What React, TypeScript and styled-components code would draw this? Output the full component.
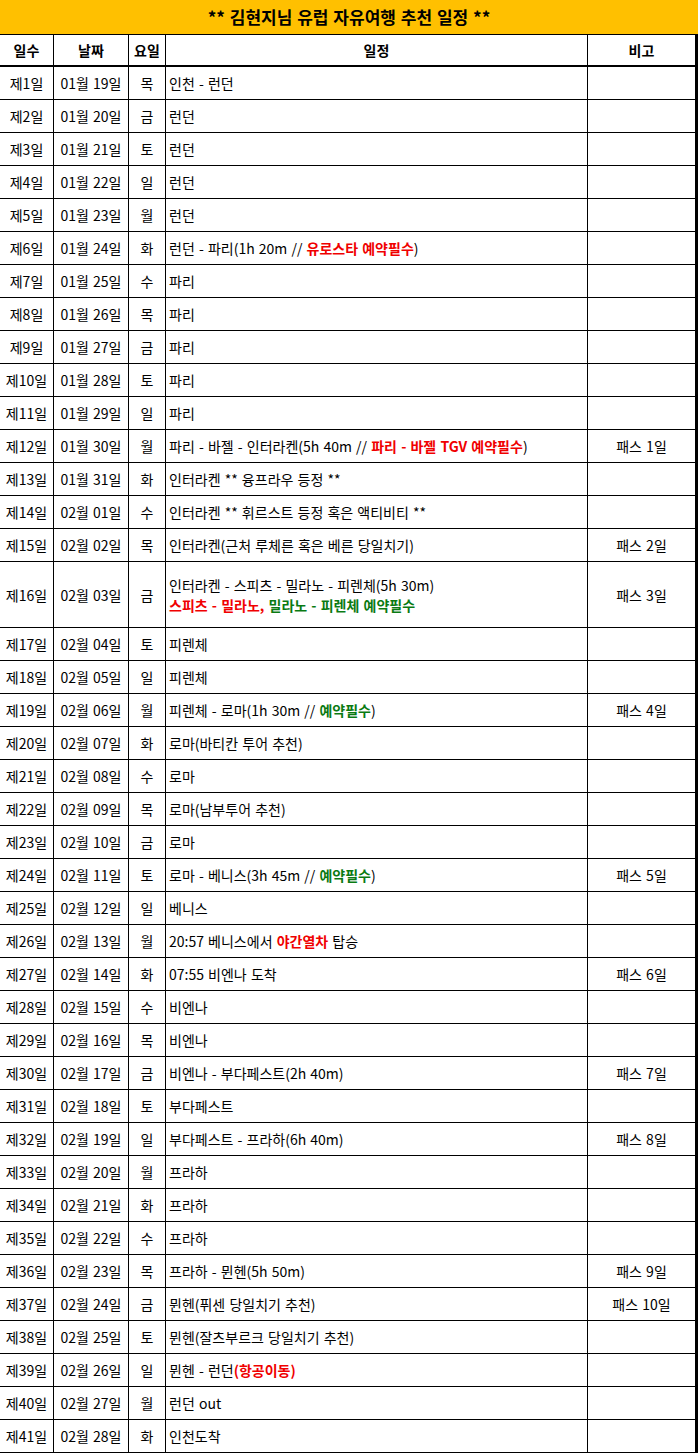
import React from 'react'
import styled, { createGlobalStyle } from 'styled-components'

const GlobalStyle = createGlobalStyle`
  html, body {
    margin: 0;
    padding: 0;
    background: #ffffff;
  }
  body {
    font-family: 'Malgun Gothic', 'Noto Sans CJK KR', 'Noto Sans', sans-serif;
    color: #000;
  }
`

const Sheet = styled.div`
  width: 698px;
  box-sizing: border-box;
`

const Title = styled.div`
  height: 35px;
  box-sizing: border-box;
  background: #ffc000;
  border-bottom: 1px solid #000;
  display: flex;
  align-items: center;
  justify-content: center;
  font-size: 17px;
  font-weight: 700;
  word-spacing: 1px;
  padding-bottom: 1px;
`

const Body = styled.div`
  border-right: 3px solid #000;
`

const Row = styled.div<{ $tall?: boolean; $head?: boolean }>`
  display: grid;
  grid-template-columns: 54px 75px 37px 422px 1fr;
  height: ${(p) => (p.$head ? 32 : p.$tall ? 66 : 33)}px;
  box-sizing: border-box;
  border-bottom: ${(p) => (p.$head ? 2 : 1)}px solid #000;
`

const Cell = styled.div<{ $left?: boolean; $bold?: boolean }>`
  display: flex;
  flex-direction: column;
  justify-content: center;
  align-items: ${(p) => (p.$left ? 'flex-start' : 'center')};
  padding-left: ${(p) => (p.$left ? 3 : 0)}px;
  box-sizing: border-box;
  border-right: 1px solid #000;
  font-size: 14px;
  font-weight: ${(p) => (p.$bold ? 700 : 400)};
  word-spacing: 1px;
  line-height: 20px;
  white-space: nowrap;
  overflow: hidden;

  &:last-child {
    border-right: none;
  }
`

const Red = styled.span`
  color: #f00000;
  font-weight: 700;
`

const Green = styled.span`
  color: #0a7a12;
  font-weight: 700;
`

type Day = {
  date: string
  wd: string
  plan: React.ReactNode
  note?: string
  tall?: boolean
}

const days: Day[] = [
  { date: '01월 19일', wd: '목', plan: '인천 - 런던' },
  { date: '01월 20일', wd: '금', plan: '런던' },
  { date: '01월 21일', wd: '토', plan: '런던' },
  { date: '01월 22일', wd: '일', plan: '런던' },
  { date: '01월 23일', wd: '월', plan: '런던' },
  {
    date: '01월 24일',
    wd: '화',
    plan: (
      <span>
        런던 - 파리(1h 20m // <Red>유로스타 예약필수</Red>)
      </span>
    ),
  },
  { date: '01월 25일', wd: '수', plan: '파리' },
  { date: '01월 26일', wd: '목', plan: '파리' },
  { date: '01월 27일', wd: '금', plan: '파리' },
  { date: '01월 28일', wd: '토', plan: '파리' },
  { date: '01월 29일', wd: '일', plan: '파리' },
  {
    date: '01월 30일',
    wd: '월',
    plan: (
      <span>
        파리 - 바젤 - 인터라켄(5h 40m // <Red>파리 - 바젤 TGV 예약필수</Red>)
      </span>
    ),
    note: '패스 1일',
  },
  { date: '01월 31일', wd: '화', plan: '인터라켄 ** 융프라우 등정 **' },
  { date: '02월 01일', wd: '수', plan: '인터라켄 ** 휘르스트 등정 혹은 액티비티 **' },
  { date: '02월 02일', wd: '목', plan: '인터라켄(근처 루체른 혹은 베른 당일치기)', note: '패스 2일' },
  {
    date: '02월 03일',
    wd: '금',
    tall: true,
    plan: (
      <>
        <span>인터라켄 - 스피츠 - 밀라노 - 피렌체(5h 30m)</span>
        <span>
          <Red>스피츠 - 밀라노,</Red> <Green>밀라노 - 피렌체 예약필수</Green>
        </span>
      </>
    ),
    note: '패스 3일',
  },
  { date: '02월 04일', wd: '토', plan: '피렌체' },
  { date: '02월 05일', wd: '일', plan: '피렌체' },
  {
    date: '02월 06일',
    wd: '월',
    plan: (
      <span>
        피렌체 - 로마(1h 30m // <Green>예약필수</Green>)
      </span>
    ),
    note: '패스 4일',
  },
  { date: '02월 07일', wd: '화', plan: '로마(바티칸 투어 추천)' },
  { date: '02월 08일', wd: '수', plan: '로마' },
  { date: '02월 09일', wd: '목', plan: '로마(남부투어 추천)' },
  { date: '02월 10일', wd: '금', plan: '로마' },
  {
    date: '02월 11일',
    wd: '토',
    plan: (
      <span>
        로마 - 베니스(3h 45m // <Green>예약필수</Green>)
      </span>
    ),
    note: '패스 5일',
  },
  { date: '02월 12일', wd: '일', plan: '베니스' },
  {
    date: '02월 13일',
    wd: '월',
    plan: (
      <span>
        20:57 베니스에서 <Red>야간열차</Red> 탑승
      </span>
    ),
  },
  { date: '02월 14일', wd: '화', plan: '07:55 비엔나 도착', note: '패스 6일' },
  { date: '02월 15일', wd: '수', plan: '비엔나' },
  { date: '02월 16일', wd: '목', plan: '비엔나' },
  { date: '02월 17일', wd: '금', plan: '비엔나 - 부다페스트(2h 40m)', note: '패스 7일' },
  { date: '02월 18일', wd: '토', plan: '부다페스트' },
  { date: '02월 19일', wd: '일', plan: '부다페스트 - 프라하(6h 40m)', note: '패스 8일' },
  { date: '02월 20일', wd: '월', plan: '프라하' },
  { date: '02월 21일', wd: '화', plan: '프라하' },
  { date: '02월 22일', wd: '수', plan: '프라하' },
  { date: '02월 23일', wd: '목', plan: '프라하 - 뮌헨(5h 50m)', note: '패스 9일' },
  { date: '02월 24일', wd: '금', plan: '뮌헨(퓌센 당일치기 추천)', note: '패스 10일' },
  { date: '02월 25일', wd: '토', plan: '뮌헨(잘츠부르크 당일치기 추천)' },
  {
    date: '02월 26일',
    wd: '일',
    plan: (
      <span>
        뮌헨 - 런던<Red>(항공이동)</Red>
      </span>
    ),
  },
  { date: '02월 27일', wd: '월', plan: '런던 out' },
  { date: '02월 28일', wd: '화', plan: '인천도착' },
]

export default function App() {
  return (
    <>
      <GlobalStyle />
      <Sheet>
        <Title>** 김현지님 유럽 자유여행 추천 일정 **</Title>
        <Body>
          <Row $head>
            <Cell $bold>일수</Cell>
            <Cell $bold>날짜</Cell>
            <Cell $bold>요일</Cell>
            <Cell $bold>일정</Cell>
            <Cell $bold>비고</Cell>
          </Row>
          {days.map((d, i) => (
            <Row key={d.date} $tall={d.tall}>
              <Cell>제{i + 1}일</Cell>
              <Cell>{d.date}</Cell>
              <Cell>{d.wd}</Cell>
              <Cell $left>{d.plan}</Cell>
              <Cell>{d.note}</Cell>
            </Row>
          ))}
        </Body>
      </Sheet>
    </>
  )
}
